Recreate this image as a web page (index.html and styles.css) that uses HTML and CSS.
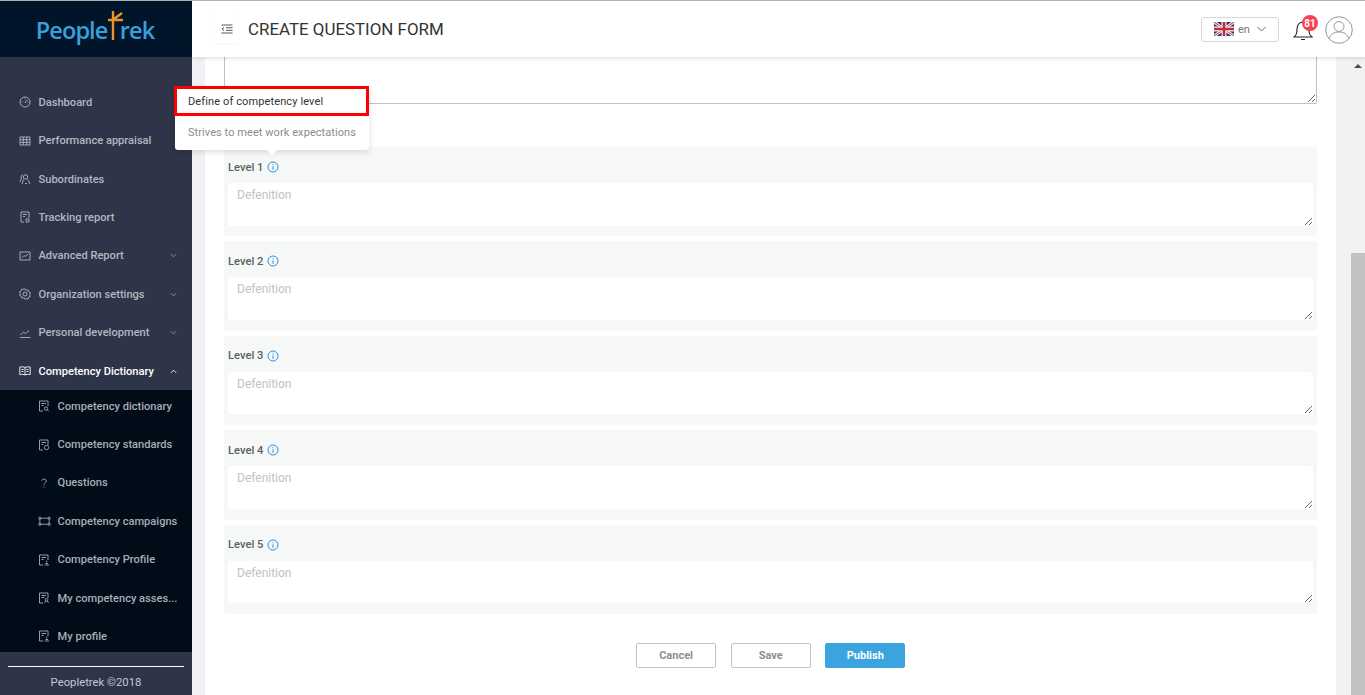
FILE: index.html
```html
<!DOCTYPE html>
<html lang="en">
<head>
<meta charset="utf-8">
<title>Create question form</title>
<link rel="stylesheet" href="styles.css">
</head>
<body>
<div class="app">
  <aside class="sidebar">
    <div class="logo"><span class="logo-word">People<span class="logo-t">T<svg class="logo-cross" width="18" height="32" viewBox="0 0 18 32"><path d="M7 1v29M2 10h15M8 9l8-6" fill="none" stroke="#e8952a" stroke-width="2.4"/></svg></span>rek</span></div>
    <nav class="menu">
      <a class="item"><svg class="ic" viewBox="0 0 12 12"><circle cx="6" cy="6" r="5"/><path d="M6 7l2-3M2.5 6h1M8.5 6h1M6 2.5v1"/></svg><span class="lbl">Dashboard</span></a>
      <a class="item"><svg class="ic" viewBox="0 0 12 12"><path d="M1 2h10v8H1zM1 4.7h10M1 7.3h10M4.3 2v8M7.7 2v8"/></svg><span class="lbl">Performance appraisal</span></a>
      <a class="item"><svg class="ic" viewBox="0 0 12 12"><circle cx="6.500" cy="4" r="2.200"/><path d="M3 11l1.500-4.500M11 11L8.800 6.500M6 10.500h2M3.500 1.500A2.500 2.500 0 0 0 2.500 5L1 9"/></svg><span class="lbl">Subordinates</span></a>
      <a class="item"><svg class="ic" viewBox="0 0 12 12"><path d="M5 11H2V1h8v6M4 3.500h4M4 5.500h2M7 8h3v3H7z"/></svg><span class="lbl">Tracking report</span></a>
      <a class="item"><svg class="ic" viewBox="0 0 12 12"><path d="M1 2h10v8H1zM3 7.500l2-2 1.500 1L9 4"/></svg><span class="lbl">Advanced Report</span><svg class="chev" viewBox="0 0 8 5"><path d="M1 1l3 3 3-3"/></svg></a>
      <a class="item"><svg class="ic" viewBox="0 0 12 12"><path d="M6 .8l1.200 1.500 1.900-.3.600 1.800 1.700.9-.7 1.800.7 1.800-1.700.9-.6 1.800-1.900-.3L6 11.200 4.800 9.700l-1.900.3-.6-1.800L.6 7.300 1.300 5.500.6 3.700l1.700-.9L2.900 1l1.900.3z"/><circle cx="6" cy="6" r="2"/></svg><span class="lbl">Organization settings</span><svg class="chev" viewBox="0 0 8 5"><path d="M1 1l3 3 3-3"/></svg></a>
      <a class="item"><svg class="ic" viewBox="0 0 12 12"><path d="M1 10.500h10.500M1.500 8l3-3 2 1.500L10 3.500"/></svg><span class="lbl">Personal development</span><svg class="chev" viewBox="0 0 8 5"><path d="M1 1l3 3 3-3"/></svg></a>
      <a class="item active"><svg class="ic" viewBox="0 0 12 12"><path d="M6 2.500C5 1.800 3 1.800.8 2v7.500c2.200-.2 4.200-.2 5.200.5 1-.7 3-.7 5.200-.5V2C9 1.800 7 1.800 6 2.500zM6 2.500V10M2.500 4.500h2M7.500 4.500h2M2.500 6.500h2M7.500 6.500h2"/></svg><span class="lbl">Competency Dictionary</span><svg class="chev" viewBox="0 0 8 5"><path d="M1 4l3-3 3 3"/></svg></a>
      <div class="submenu">
        <a class="subitem"><svg class="ic" viewBox="0 0 12 12"><path d="M5 11H1.500V1h8.500v5M3.500 3.500h4.500M3.500 5.500h2"/><circle cx="8" cy="8.500" r="1.700"/><path d="M9.300 9.800l1.500 1.500"/></svg><span class="lbl">Competency dictionary</span></a>
        <a class="subitem"><svg class="ic" viewBox="0 0 12 12"><path d="M5 11H1.500V1h8.500v5M3.500 3.500h4.500M3.500 5.500h2"/><circle cx="8.500" cy="8.500" r="2.200"/></svg><span class="lbl">Competency standards</span></a>
        <a class="subitem"><svg class="ic" viewBox="0 0 12 12"><path d="M3.700 3.700C4 1.500 8.300 1.500 8.300 4 8.300 5.700 6 5.700 6 7.700M6 9.500v1"/></svg><span class="lbl">Questions</span></a>
        <a class="subitem"><svg class="ic camp" viewBox="0 0 14 12"><path d="M1 2h2v2H1zM11 2h2v2h-2zM1 8.500h2v2H1zM11 8.500h2v2h-2zM3 3h8M3 9.500h8M2 4v4.500M12 4v4.500"/></svg><span class="lbl">Competency campaigns</span></a>
        <a class="subitem"><svg class="ic" viewBox="0 0 12 12"><path d="M5 11H1.500V1h8.500v5M3.500 3.500h4.500M3.500 5.500h2M6.500 11h4.500M7.500 9.500h2.500M8.700 6.500v2"/></svg><span class="lbl">Competency Profile</span></a>
        <a class="subitem"><svg class="ic" viewBox="0 0 12 12"><path d="M5 11H1.500V1h8.500v5M3.500 3.500h4.500M3.500 5.500h3"/><circle cx="8.500" cy="7.800" r="1.300"/><path d="M6.500 11l1-1.800M10.500 11l-1-1.800"/></svg><span class="lbl">My competency asses...</span></a>
        <a class="subitem"><svg class="ic" viewBox="0 0 12 12"><path d="M5 11H1.500V1h8.500v5M3.500 3.500h4.500M3.500 5.500h2M6.500 11h4.500M7.500 9.500h2.500M8.700 6.500v2"/></svg><span class="lbl">My profile</span></a>
      </div>
    </nav>
    <footer class="side-foot"><div class="side-foot-text">Peopletrek ©2018</div></footer>
  </aside>
  <div class="main">
    <header class="topbar">
      <button class="toggle" type="button"><svg width="12" height="10" viewBox="0 0 12 10"><path d="M.5 1h11M5 3.700h6.500M5 6.300h6.500M.5 9h11M3 3.500L1 5l2 1.500" fill="none" stroke="#555" stroke-width="1"/></svg></button>
      <h1 class="title">CREATE QUESTION FORM</h1>
      <div class="top-right">
        <div class="lang">
          <svg width="20" height="14" viewBox="0 0 20 14"><rect width="20" height="14" fill="#2b3a75"/><path d="M0 0l20 14M20 0L0 14" stroke="#eee" stroke-width="3"/><path d="M0 0l20 14M20 0L0 14" stroke="#c8283c" stroke-width="1"/><path d="M10 0v14M0 7h20" stroke="#eee" stroke-width="5"/><path d="M10 0v14M0 7h20" stroke="#c8283c" stroke-width="2.600"/></svg>
          <span class="lang-code">en</span>
          <svg width="9" height="6" viewBox="0 0 9 6"><path d="M.5 1l4 4 4-4" fill="none" stroke="#666" stroke-width="1"/></svg>
        </div>
        <div class="bell">
          <svg width="20" height="22" viewBox="0 0 20 22"><path d="M1 18c2-2 3-3 3-8 0-4 2.500-7 6-7s6 3 6 7c0 5 1 6 3 8zM8 20.500h4" fill="none" stroke="#222" stroke-width="1.100"/></svg>
          <span class="badge">81</span>
        </div>
        <svg class="avatar" width="28" height="28" viewBox="0 0 28 28"><circle cx="14" cy="14" r="13.300" fill="#fff" stroke="#999" stroke-width="1"/><circle cx="14" cy="10.500" r="5" fill="none" stroke="#999" stroke-width="1"/><path d="M4 23c1.500-5 5-7 10-7s8.500 2 10 7" fill="none" stroke="#999" stroke-width="1"/></svg>
      </div>
    </header>
    <div class="body-row">
      <div class="gutter-area">
        <main class="card">
          <textarea class="top-text" aria-label="Question"></textarea>
          <section class="levels">
            <div class="level"><div class="level-label">Level 1 <svg class="info" viewBox="0 0 12 12"><circle cx="6" cy="6" r="5"/><path d="M6 5.300v3.500M6 3.200v1"/></svg></div><textarea class="def" placeholder="Defenition"></textarea></div>
            <div class="level"><div class="level-label">Level 2 <svg class="info" viewBox="0 0 12 12"><circle cx="6" cy="6" r="5"/><path d="M6 5.300v3.500M6 3.200v1"/></svg></div><textarea class="def" placeholder="Defenition"></textarea></div>
            <div class="level"><div class="level-label">Level 3 <svg class="info" viewBox="0 0 12 12"><circle cx="6" cy="6" r="5"/><path d="M6 5.300v3.500M6 3.200v1"/></svg></div><textarea class="def" placeholder="Defenition"></textarea></div>
            <div class="level"><div class="level-label">Level 4 <svg class="info" viewBox="0 0 12 12"><circle cx="6" cy="6" r="5"/><path d="M6 5.300v3.500M6 3.200v1"/></svg></div><textarea class="def" placeholder="Defenition"></textarea></div>
            <div class="level"><div class="level-label">Level 5 <svg class="info" viewBox="0 0 12 12"><circle cx="6" cy="6" r="5"/><path d="M6 5.300v3.500M6 3.200v1"/></svg></div><textarea class="def" placeholder="Defenition"></textarea></div>
          </section>
          <div class="actions">
            <button class="btn" type="button">Cancel</button>
            <button class="btn" type="button">Save</button>
            <button class="btn primary" type="button">Publish</button>
          </div>
        </main>
      </div>
      <div class="scrollbar"><span class="arrow"></span><span class="thumb"></span></div>
    </div>
  </div>
</div>
<div class="tip">
  <div class="tip-title">Define of competency level</div>
  <div class="tip-text">Strives to meet work expectations</div>
</div>
</body>
</html>
```
FILE: styles.css
```css
* { box-sizing: border-box; }
html, body { margin: 0; height: 100%; overflow: hidden; }
body { font-family: Roboto, "Liberation Sans", sans-serif; background: #f0f2f5; }
.app { display: flex; height: 695px; }

.sidebar { width: 192px; flex: none; display: flex; flex-direction: column; background: #2f3548; }
.logo { height: 57px; flex: none; background: #001529; border-top: 1px solid #a9b4b0; display: flex; align-items: center; justify-content: center; padding: 3px 2px 0 0; }
.logo-word { font-family: "Open Sans", sans-serif; font-size: 23.5px; font-weight: 600; color: #39a0dc; letter-spacing: -.9px; line-height: 1; }
.logo-t { position: relative; color: transparent; }
.logo-cross { position: absolute; left: -1px; top: -4px; }

.menu { flex: 1; padding-top: 26.1px; }
.item, .subitem { display: flex; align-items: center; height: 38.4px; font-size: 11.1px; font-weight: 500; color: #b3b7c0; white-space: nowrap; }
.item { padding: 0 15px 0 19px; }
.subitem { padding-left: 38px; color: #a7aeb6; }
.submenu { background: #000c17; height: 262px; display: flex; flex-direction: column; }
.subitem { flex: none; position: relative; top: -3.3px; }
.ic { width: 12px; height: 12px; flex: none; margin-right: 7.500px; fill: none; stroke: currentColor; stroke-width: .9; }
.camp { width: 13px; margin-right: 6.500px; }
.lbl { flex: 1; }
.chev { width: 7px; height: 5px; flex: none; fill: none; stroke: currentColor; stroke-width: 1; opacity: .75; }
.item.active { color: #fff; }
.item.active .chev { opacity: 1; }
.side-foot { height: 43px; flex: none; padding: 14px 8px 0; }
.side-foot-text { border-top: 1px solid #fff; text-align: center; color: #c4c8cf; font-size: 11.3px; padding-top: 9px; }

.main { flex: 1; min-width: 0; display: flex; flex-direction: column; position: relative; }
.topbar { height: 57px; flex: none; background: #fff; border-top: 1px solid #a9b4b0; display: flex; align-items: center; padding: 2px 12px 0 24px; box-shadow: 0 1px 4px rgba(0,0,0,.15); position: relative; z-index: 2; }
.toggle { width: 24px; height: 28px; border: 0; padding: 0; background: #fff; display: flex; align-items: center; justify-content: center; margin: -2px 9px 0 -1px; box-shadow: 0 1px 2px rgba(0,0,0,.04); }
.title { margin: -2px 0 0; font-size: 16.9px; font-weight: 400; color: #333; white-space: nowrap; }
.top-right { margin-left: auto; display: flex; align-items: center; }
.lang { width: 78px; height: 25px; margin-top: -2px; border: 1px solid #d4d7d9; border-radius: 3px; display: flex; align-items: center; padding: 0 12px; gap: 4px; }
.lang-code { font-size: 11px; color: #777; flex: 1; }
.bell { position: relative; width: 20px; height: 22px; margin: 0 12px 0 14px; }
.badge { position: absolute; left: 9px; top: -4px; width: 16px; height: 16px; border-radius: 50%; background: #f5424f; color: #fff; font-size: 10px; font-weight: 700; display: flex; align-items: center; justify-content: center; }
.avatar { flex: none; }

.body-row { flex: 1; min-height: 0; display: flex; }
.gutter-area { flex: 1; min-width: 0; padding: 0 15px 0 13px; }
.card { height: 100%; background: #fff; padding: 0 19px; display: flex; flex-direction: column; }
.top-text { height: 47px; width: 100%; flex: none; border: 1px solid #bfc2c4; border-top: 0; border-radius: 0 0 2px 2px; background: #fff; display: block; }
.levels { margin-top: 43px; display: flex; flex-direction: column; gap: 5px; }
.level { height: 89.4px; background: #f6f8f8; border-radius: 2px; padding: 0 4px; }
.level-label { height: 36px; display: flex; align-items: center; gap: 4px; font-size: 11.2px; font-weight: 500; color: #5b6066; padding-top: 4.1px; }
.info { width: 12px; height: 12px; fill: none; stroke: #2b90e0; stroke-width: 1; }
.def { display: block; width: 100%; height: 42.6px; border: 0; border-radius: 2px; background: #fff; padding: 5px 9px; font: 400 12px Roboto, sans-serif; color: #333; outline: none; }
.def::placeholder { color: #bfc2c6; opacity: 1; }
.actions { display: flex; justify-content: center; gap: 14.6px; margin-top: 29.5px; padding-left: .4px; }
.btn { width: 80px; height: 25px; border: 1px solid #bfc3c6; border-radius: 2px; background: #fff; font: 700 11px Roboto, sans-serif; color: #8a8f94; padding: 0; }
.btn.primary { background: #39a4dd; border-color: #39a4dd; color: #fff; }

.scrollbar { width: 14px; flex: none; background: #f1f1f1; display: flex; flex-direction: column; align-items: center; }
.arrow { width: 0; height: 0; margin-top: 7px; border: 4px solid transparent; border-top: 0; border-bottom: 4px solid #505050; }
.thumb { width: 100%; margin-top: auto; height: 442px; background: #c1c1c1; }

.tip { position: absolute; left: 175px; top: 86px; width: 194px; height: 64px; background: #fff; border-radius: 3px; box-shadow: 0 2px 6px rgba(0,0,0,.14); z-index: 5; }
.tip::after { content: ""; position: absolute; left: 92px; bottom: -5px; border: 5px solid transparent; border-bottom: 0; border-top: 5px solid #fff; }
.tip-title { height: 30px; border: 3px solid #f00; margin-left: -1px; font-size: 11px; color: #333; padding-left: 11px; line-height: 25px; white-space: nowrap; letter-spacing: .12px; }
.tip-text { font-size: 11px; color: #8c8c8c; padding: 10px 13px 0; white-space: nowrap; letter-spacing: .07px; }
```
